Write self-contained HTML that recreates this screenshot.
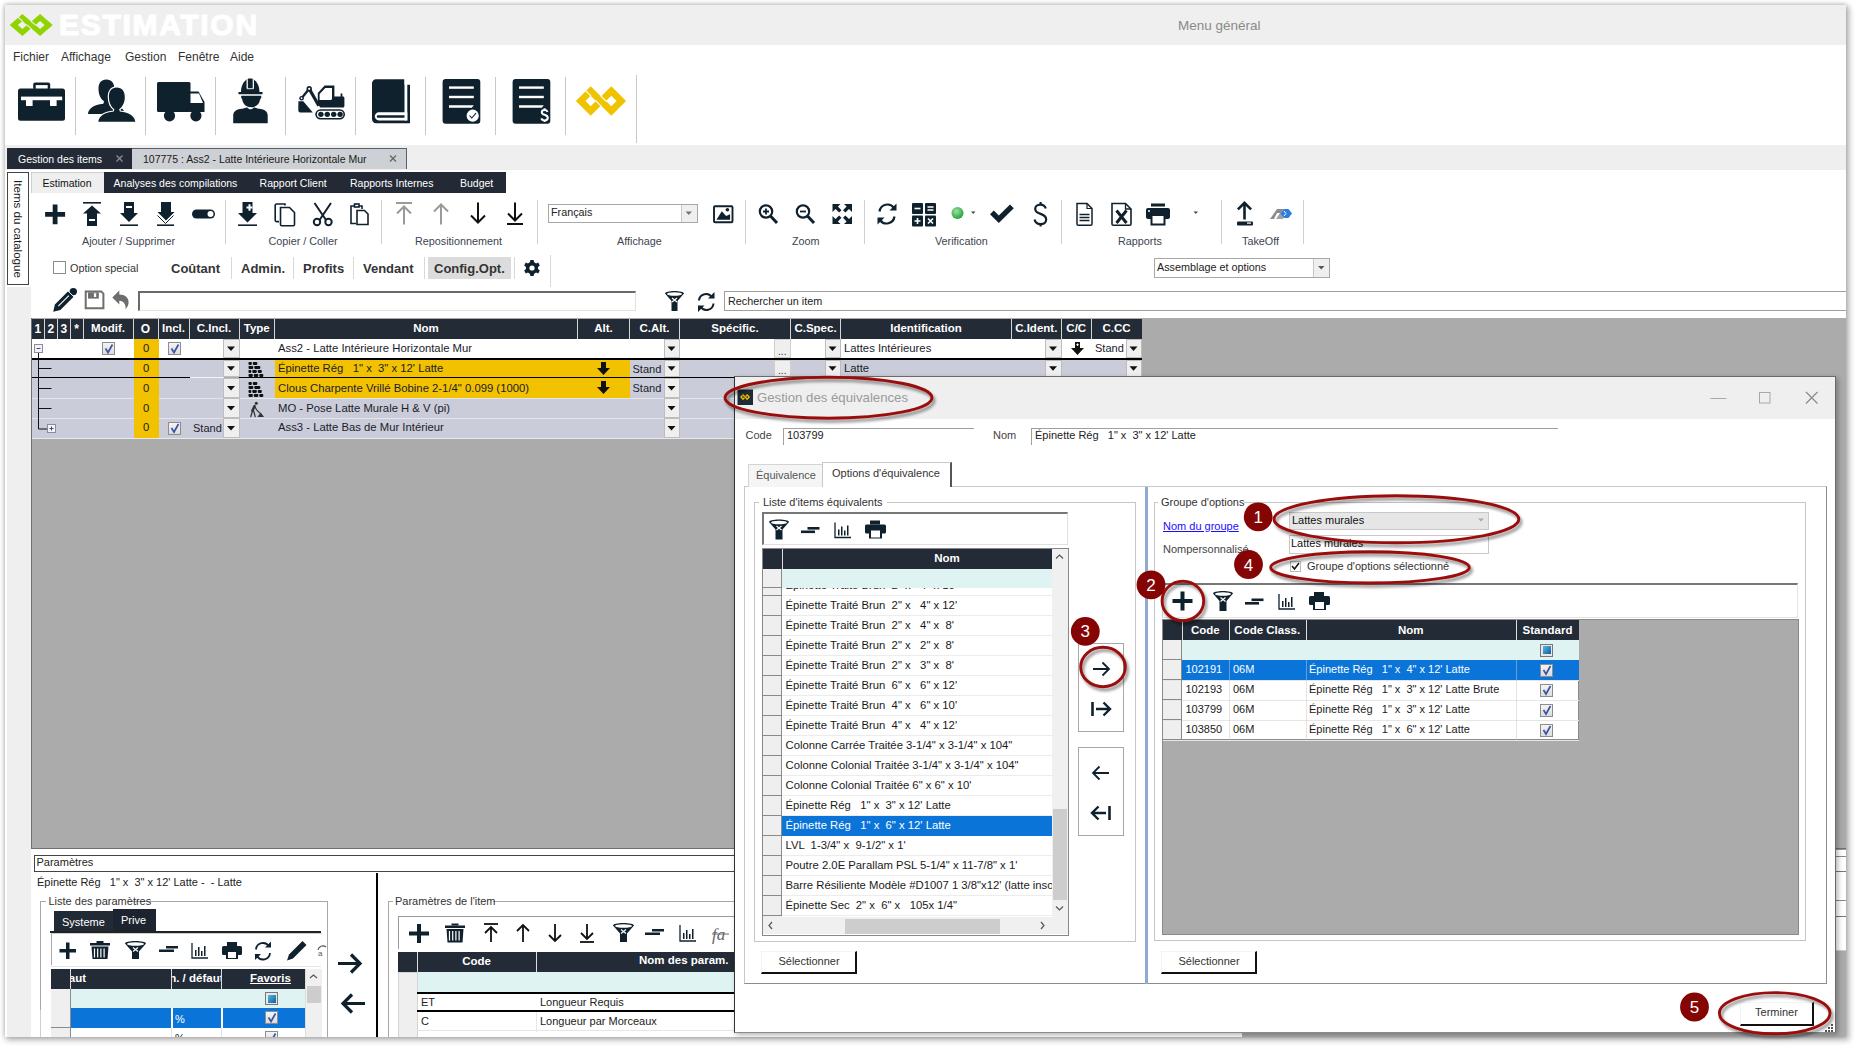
<!DOCTYPE html>
<html><head><meta charset="utf-8">
<style>
*{box-sizing:border-box;margin:0;padding:0}
html,body{width:1855px;height:1046px;overflow:hidden;background:#fff;font-family:"Liberation Sans",sans-serif;font-size:11px;color:#222}
.a{position:absolute}
.t{position:absolute;white-space:nowrap;line-height:1}
svg{position:absolute;overflow:visible}
#win{left:5px;top:5px;width:1841px;height:1032px;background:#fff;box-shadow:2px 2px 6px 1px rgba(0,0,0,.32),-1px -1px 4px rgba(0,0,0,.15)}
#app{left:0;top:0;width:1846px;height:1037px;overflow:hidden}
.sep{position:absolute;width:1px;background:#c8c8c8}
</style></head><body>
<div id="win" class="a"></div>
<div id="app" class="a">

<div class="a" style="left:5px;top:5px;width:1841px;height:39.5px;background:#efefef;"></div>
<svg style="left:0;top:0" width="1" height="1"><g transform="translate(22.4,25) scale(0.858,0.743)"><path fill-rule="evenodd" fill="#8fd400" d="M-14.8 0L0 -14.8L14.8 0L0 14.8ZM-5.3 0L0 5.3L5.3 0L0 -5.3Z"/><path fill-rule="evenodd" fill="#8fd400" d="M5.800000000000001 0L20.6 -14.8L35.400000000000006 0L20.6 14.8ZM15.3 0L20.6 5.3L25.900000000000002 0L20.6 -5.3Z"/><path d="M-5.2 -10.5L0.4 -4.9M10 -5.2L15.7 0.5M4.8 -0.5L10.5 5.2" stroke="#efefef" stroke-width="1.3" fill="none"/></g></svg>
<div class="t" style="left:59.0px;top:10.2px;font-size:30px;color:#fff;font-weight:bold;letter-spacing:1.7px;-webkit-text-stroke:1.2px #fff;">ESTIMATION</div>
<div class="t" style="left:1178.0px;top:18.6px;font-size:13.5px;color:#8a8a8a;">Menu général</div>
<div class="t" style="left:13.0px;top:51.0px;font-size:12px;color:#333;">Fichier</div>
<div class="t" style="left:61.0px;top:51.0px;font-size:12px;color:#333;">Affichage</div>
<div class="t" style="left:125.0px;top:51.0px;font-size:12px;color:#333;">Gestion</div>
<div class="t" style="left:178.0px;top:51.0px;font-size:12px;color:#333;">Fenêtre</div>
<div class="t" style="left:230.0px;top:51.0px;font-size:12px;color:#333;">Aide</div>
<div class="sep" style="left:75px;top:77px;height:58px"></div>
<div class="sep" style="left:145px;top:77px;height:58px"></div>
<div class="sep" style="left:215px;top:77px;height:58px"></div>
<div class="sep" style="left:285px;top:77px;height:58px"></div>
<div class="sep" style="left:355px;top:77px;height:58px"></div>
<div class="sep" style="left:425px;top:77px;height:58px"></div>
<div class="sep" style="left:495px;top:77px;height:58px"></div>
<div class="sep" style="left:565px;top:77px;height:58px"></div>
<div class="sep" style="left:636px;top:75px;height:68px"></div>
<svg style="left:0;top:0" width="660" height="150">
 <g fill="#10212e">
  <!-- briefcase -->
  <rect x="33.2" y="82.6" width="17" height="7" rx="2"/>
  <rect x="35.7" y="85.1" width="12" height="4" fill="#fff"/>
  <rect x="18" y="88.6" width="47" height="32.2" rx="2.5"/>
  <rect x="21" y="96.6" width="41.2" height="3.6" fill="#fff"/>
  <rect x="26" y="100" width="6.6" height="6" fill="#fff"/>
  <rect x="50" y="100" width="6.6" height="6" fill="#fff"/>
  <!-- users -->
  <path transform="translate(-10.4,-7.9)" d="M98.3 121.8C99 116.5 103.5 112.5 113.8 111.6L114.4 109.2C111 107 109 102.5 108.9 97C108.8 91 111.5 87.4 116.8 87.4C122 87.4 124.8 91 124.8 97C124.8 102.5 122.5 107 119.2 109.2L119.8 111.6C130 112.5 134.5 116.5 135.3 121.8Z"/>
  <path d="M98.3 121.8C99 116.5 103.5 112.5 113.8 111.6L114.4 109.2C111 107 109 102.5 108.9 97C108.8 91 111.5 87.4 116.8 87.4C122 87.4 124.8 91 124.8 97C124.8 102.5 122.5 107 119.2 109.2L119.8 111.6C130 112.5 134.5 116.5 135.3 121.8Z" stroke="#fff" stroke-width="2.4"/>
  <path d="M98.3 121.8C99 116.5 103.5 112.5 113.8 111.6L114.4 109.2C111 107 109 102.5 108.9 97C108.8 91 111.5 87.4 116.8 87.4C122 87.4 124.8 91 124.8 97C124.8 102.5 122.5 107 119.2 109.2L119.8 111.6C130 112.5 134.5 116.5 135.3 121.8Z"/>
  <!-- truck -->
  <rect x="157" y="82" width="33.5" height="30" rx="1.5"/>
  <path d="M190 91.4h8.5l6 10.5v10.1h-14.5z"/>
  <path d="M190.5 93.6h8.5l4 9.5h-12.5z" fill="#fff"/>
  <circle cx="169.5" cy="115.8" r="5.6"/>
  <circle cx="195.9" cy="115.8" r="5.6"/>
  <!-- worker -->
  <rect x="247.7" y="78.5" width="5" height="10" rx="1"/>
  <path d="M241 92c0 -7 3.5 -11.5 6 -12.5v8.5h6.5v-8.5c2.5 1 6 5.5 6 12.5h3v2.3h-24v-2.3z"/>
  <path d="M247 80v8.7h6.5v-8.7" fill="none" stroke="#fff" stroke-width="0.9"/>
  <path d="M241.5 95.8h19.5c.5 1 .5 2 -.8 3.5c-.7 5 -4.5 8 -9 8c-4.5 0 -8.5 -3 -9 -8c-1.3 -1.5 -1.3 -2.5 -.7 -3.5z"/>
  <path d="M242 108.8c2 -.5 4 -1 5 -1.5c1 1.5 2.5 2 3.5 2c1 0 2.5 -.5 3.5 -2c1 .5 3 1 5 1.5c6 .5 8.5 3 8.7 6.5v8h-34.5v-8c.3 -3.5 2.5 -6 8.8 -6.5z"/>
  <!-- excavator -->
  <path d="M298.4 101.2h4.9l9.5 11.2h-12.6c-1 0 -1.9 -.8 -1.9 -1.9z"/>
  <path d="M301.6 98.2L309.2 88.8" stroke="#10212e" stroke-width="2.3"/>
  <path d="M309.2 88.8L318.8 105.8" stroke="#10212e" stroke-width="3.2"/>
  <circle cx="309.2" cy="88.8" r="2.7"/><circle cx="309.2" cy="88.8" r="1.1" fill="#fff"/>
  <circle cx="301.6" cy="98.2" r="2.3"/><circle cx="301.6" cy="98.2" r="0.9" fill="#fff"/>
  <path d="M317.8 93L324.6 85.6H334.4V96.4H340.6V93.4H342.4V96.4H343C343.8 96.4 344.4 97 344.4 97.8V106C344.4 106.8 343.8 107.6 343 107.6H320.2L317.8 104z"/>
  <path d="M319.6 94L325.3 88H332V98.8C332 99.5 331.5 100 330.8 100H319.6z" fill="#fff"/>
  <rect x="315.3" y="109.2" width="29.7" height="10.3" rx="5.15"/>
  <rect x="316.9" y="110.8" width="26.5" height="7.1" rx="3.55" fill="#fff"/>
  <circle cx="320.9" cy="114.35" r="2.7"/><circle cx="327.3" cy="114.35" r="2.7"/><circle cx="333.7" cy="114.35" r="2.7"/><circle cx="340.1" cy="114.35" r="2.7"/>
  <!-- book -->
  <path d="M376 79.2H404.5V84.8H410V123.3H376C373.8 123.3 372 121.5 372 119.3V83.2C372 81 373.8 79.2 376 79.2Z"/>
  <rect x="404.5" y="79" width="2.8" height="41.4" fill="#fff"/>
  <path d="M378.9 112.2H407.3V120.4H378.9C376.6 120.4 374.8 118.6 374.8 116.3C374.8 114 376.6 112.2 378.9 112.2Z" fill="#fff"/>
  <path d="M378 115.2H404.5V117.7H378C377.3 117.7 376.8 117.2 376.8 116.45C376.8 115.7 377.3 115.2 378 115.2Z"/>
  <!-- doc check -->
  <rect x="442.6" y="79" width="37.7" height="44.8" rx="3"/>
  <rect x="449" y="86.4" width="24.8" height="2.4" fill="#fff"/>
  <rect x="449" y="95.8" width="24.8" height="2.4" fill="#fff"/>
  <path d="M449 105.3h24.8l-2 2.4h-22.8z" fill="#fff"/>
  <circle cx="472.7" cy="115.7" r="6.1" fill="#fff"/>
  <path d="M469.5 115.5l2.3 2.5l4.2 -4.8" fill="none" stroke="#10212e" stroke-width="1.1"/>
  <!-- doc dollar -->
  <rect x="512.6" y="79" width="37.7" height="44.8" rx="3"/>
  <rect x="519" y="86.4" width="24.8" height="2.4" fill="#fff"/>
  <rect x="519" y="95.8" width="24.8" height="2.4" fill="#fff"/>
  <path d="M519 105.3h24.8l-2 2.4h-22.8z" fill="#fff"/>
  <path d="M547.6 111.8C547 110.5 546 109.9 544.6 109.9C542.8 109.9 541.8 110.9 541.8 112.2C541.8 113.7 543 114.3 544.6 114.8C546.5 115.4 547.8 116 547.8 117.8C547.8 119.3 546.6 120.4 544.6 120.4C543 120.4 541.8 119.6 541.3 118.3M544.6 108.2V110M544.6 120.3V122" fill="none" stroke="#fff" stroke-width="2"/>
 </g>
 <g transform="translate(590.7,101) scale(1,1)"><path fill-rule="evenodd" fill="#f0c300" d="M-14.8 0L0 -14.8L14.8 0L0 14.8ZM-5.3 0L0 5.3L5.3 0L0 -5.3Z"/><path fill-rule="evenodd" fill="#f0c300" d="M5.800000000000001 0L20.6 -14.8L35.400000000000006 0L20.6 14.8ZM15.3 0L20.6 5.3L25.900000000000002 0L20.6 -5.3Z"/><path d="M-5.2 -10.5L0.4 -4.9M10 -5.2L15.7 0.5M4.8 -0.5L10.5 5.2" stroke="#fff" stroke-width="1.1" fill="none"/></g>
</svg>
<div class="a" style="left:5px;top:145px;width:1841px;height:25px;background:#efefef;"></div>
<div class="a" style="left:7px;top:148px;width:125px;height:21px;background:#232a35;"></div>
<div class="t" style="left:18.0px;top:153.6px;font-size:10.5px;color:#fff;">Gestion des items</div>
<svg style="left:0;top:0" width="1" height="1"><path d="M116.5 155.5l6 6m0 -6l-6 6" stroke="#8a8f96" stroke-width="1.3"/></svg>
<div class="a" style="left:132px;top:148px;width:275px;height:21px;background:#cdd1d5;border:none;border-top:1px solid #55606b;border-right:1px solid #55606b;"></div>
<div class="t" style="left:143.0px;top:153.6px;font-size:10.5px;color:#1a1a1a;">107775 : Ass2 - Latte Intérieure Horizontale Mur</div>
<svg style="left:0;top:0" width="1" height="1"><path d="M390 155.5l6 6m0 -6l-6 6" stroke="#666" stroke-width="1.3"/></svg>
<div class="a" style="left:7px;top:287px;width:24px;height:753px;background:#efefef;"></div>
<div class="a" style="left:7px;top:172px;width:22px;height:113px;background:#fff;border:1px solid #444;"></div>
<div class="t" style="left:11.5px;top:179.5px;font-size:11.6px;color:#1a1a1a;writing-mode:vertical-rl;line-height:13px">Items du catalogue</div>
<div class="a" style="left:31px;top:172px;width:73px;height:21px;background:#efefef;border:none;border-left:1px solid #d0d0d0;border-top:1px solid #d0d0d0;"></div>
<div class="t" style="left:42.5px;top:177.9px;font-size:10.5px;color:#111;">Estimation</div>
<div class="a" style="left:104px;top:172px;width:402px;height:21px;background:#232a35;"></div>
<div class="t" style="left:113.6px;top:177.9px;font-size:10.5px;color:#fff;">Analyses des compilations</div>
<div class="t" style="left:259.6px;top:177.9px;font-size:10.5px;color:#fff;">Rapport Client</div>
<div class="t" style="left:350.0px;top:177.9px;font-size:10.5px;color:#fff;">Rapports Internes</div>
<div class="t" style="left:460.0px;top:177.9px;font-size:10.5px;color:#fff;">Budget</div>
<svg style="left:0;top:0" width="1" height="1">
<g fill="#10212e">
 <path d="M52.7 204.5h4.8v7.4h7.6v4.8h-7.6v7.6h-4.8v-7.6h-7.6v-4.8h7.6z"/>
 <rect x="83" y="202" width="18" height="1.6"/>
 <path d="M92 205.5l9 8h-4v12.5h-10v-12.5h-4z"/><rect x="89" y="219" width="6" height="2" fill="#fff"/>
 <path d="M124 202h10v11h4l-9 9l-9 -9h4z"/><rect x="126" y="206" width="6" height="2" fill="#fff"/><rect x="120" y="224.4" width="18" height="1.6"/>
 <path d="M161 202h10v10h3.5l-8.5 8.5l-8.5 -8.5h3.5z"/><path d="M157.5 215.5l8 8l8 -8" fill="none" stroke="#10212e" stroke-width="1"/><rect x="157" y="224.4" width="17" height="1.6"/>
 <rect x="192" y="209.5" width="23" height="9" rx="4.5"/><circle cx="210.5" cy="214" r="3" fill="#fff"/>
 <path d="M242.5 202h10v11h4.5l-9.5 9.5l-9.5 -9.5h4.5z"/><path d="M246.5 206.5h2v-2.2h2v2.2h2v2h-2v2.2h-2v-2.2h-2z" fill="#fff"/><rect x="238" y="224.4" width="19" height="1.6"/>
</g>
<g fill="none" stroke="#10212e" stroke-width="1.6">
 <path d="M285 205.5v-1.5h-8.5c-.8 0 -1.3 .5 -1.3 1.3v15c0 .8 .5 1.3 1.3 1.3h2.5"/>
 <path d="M280.5 207.5h9l5 5v12c0 .8 -.5 1.3 -1.3 1.3h-11.4c-.8 0 -1.3 -.5 -1.3 -1.3z"/>
 <circle cx="317" cy="222" r="3.2" stroke-width="2"/><circle cx="328.5" cy="222" r="3.2" stroke-width="2"/>
 <path d="M314.5 203l11.5 17m5 -17l-11.5 17" stroke-width="2"/>
 <path d="M354 206h-3v17.5h5m3 -17.5h3v3"/><rect x="354.5" y="204" width="4.5" height="3"/>
 <path d="M357 210.5h7.5l3.5 3.5v10.5h-11z"/>
</g>
<g fill="none" stroke="#9a9a9a" stroke-width="2">
 <path d="M396 203h16"/><path d="M404 224.5v-18m-7 7l7 -7l7 7"/>
 <path d="M441 224.5v-20m-7 7l7 -7l7 7"/>
</g>
<g fill="none" stroke="#111" stroke-width="2">
 <path d="M478 202.5v20m-7 -7l7 7l7 -7"/>
 <path d="M515 202.5v18m-7 -7l7 7l7 -7"/><path d="M507 224h16"/>
</g>
<g fill="none" stroke="#10212e">
 <rect x="714" y="206.2" width="18.5" height="16" rx="1" stroke-width="1.9"/>
 <path d="M716.5 219.8l5.3 -8.6l4.3 4.8l4 -1.8v5.6z" fill="#10212e" stroke="none"/><circle cx="727.4" cy="209.8" r="1.8" fill="#10212e" stroke="none"/>
 <circle cx="766" cy="211.5" r="6.2" stroke-width="2.2"/><path d="M763 211.5h6m-3 -3v6" stroke-width="1.8"/><path d="M770.5 216l6.5 7" stroke-width="3"/>
 <circle cx="803" cy="211.5" r="6.2" stroke-width="2.2"/><path d="M800 211.5h6" stroke-width="1.8"/><path d="M807.5 216l6.5 7" stroke-width="3"/>
</g>
<g fill="#10212e">
 <path d="M832.5 204h8l-2.6 2.6l3.6 3.6l-2.4 2.4l-3.6 -3.6l-3 3z"/><path d="M852 204h-8l2.6 2.6l-3.6 3.6l2.4 2.4l3.6 -3.6l3 3z"/>
 <path d="M832.5 224h8l-2.6 -2.6l3.6 -3.6l-2.4 -2.4l-3.6 3.6l-3 -3z"/><path d="M852 224h-8l2.6 -2.6l-3.6 -3.6l2.4 -2.4l3.6 3.6l3 -3z"/>
</g>
<g fill="none" stroke="#10212e" stroke-width="2.2">
 <path d="M879.5 211.5a8 8 0 0 1 14.5 -3.5"/><path d="M894.5 216.5a8 8 0 0 1 -14.5 3.5"/>
</g>
<g fill="#10212e">
 <path d="M896.5 203.5v7h-7z"/><path d="M877.5 224.5v-7h7z"/>
 <rect x="912" y="203" width="11" height="11" rx="1"/><rect x="925" y="203" width="11" height="11" rx="1"/>
 <rect x="912" y="215.5" width="11" height="11" rx="1"/><rect x="925" y="215.5" width="11" height="11" rx="1"/>
</g>
<g stroke="#fff" stroke-width="1.6" fill="none">
 <path d="M914.5 208.5h6"/><path d="M927.5 207h6m-6 3h6"/><path d="M914.5 221h6m-3 -3v6"/><path d="M928 218.5l5 5m0 -5l-5 5"/>
</g>
<defs><radialGradient id="gd" cx="0.4" cy="0.35" r="0.7"><stop offset="0" stop-color="#9de39d"/><stop offset="1" stop-color="#1e9a3a"/></radialGradient></defs>
<circle cx="957.5" cy="213" r="6" fill="url(#gd)"/>
<path d="M971 211.5h4.5l-2.25 2.5z" fill="#444"/>
<path d="M990 214.2l3.8 -3.8l5 5l11.2 -11l3.8 3.8l-15 14.9z" fill="#10212e"/>
<path d="M1045.8 208.5C1045 205.8 1042.8 204.6 1040.3 204.6C1037.3 204.6 1035.2 206.5 1035.2 209C1035.2 212 1037.8 213 1040.6 213.9C1044 215 1046.2 216.5 1046.2 219.6C1046.2 222.6 1043.6 224.2 1040.6 224.2C1037.4 224.2 1035.2 222.4 1034.6 219.6M1040.6 202v2.8M1040.6 224v2.6" fill="none" stroke="#10212e" stroke-width="2.2"/>
<g fill="none" stroke="#10212e" stroke-width="1.5">
 <path d="M1077 203.5h10l5 5v15.5c0 .8 -.5 1.3 -1.3 1.3h-12.4c-.8 0 -1.3 -.5 -1.3 -1.3z"/><path d="M1079.5 214.5h10m-10 3h10m-10 3h10" stroke-width="1.6"/>
 <path d="M1112 203.5h13.5l5.5 5.5v15c0 .8 -.5 1.3 -1.3 1.3h-16.4c-.8 0 -1.3 -.5 -1.3 -1.3z" stroke-width="1.6"/>
</g>
<path d="M1116.5 210.5l10 12.5m0 -12.5l-10 12.5" stroke="#10212e" stroke-width="3"/><path d="M1125.5 203.5v5.5h5.5" fill="none" stroke="#10212e" stroke-width="1.3"/><path d="M1087 203.5v5h5" fill="none" stroke="#10212e" stroke-width="1.2"/>
<g fill="#10212e">
 <rect x="1151" y="203.5" width="14" height="3"/><rect x="1146" y="208" width="24" height="11" rx="2"/>
 <rect x="1150.5" y="214" width="15" height="11.5"/><rect x="1152.5" y="216" width="11" height="7.5" fill="#fff"/><circle cx="1149" cy="211" r="1" fill="#fff"/>
 <path d="M1193.5 211.5h4.5l-2.25 2.5z" fill="#444"/>
 <path d="M1244.5 201l7.5 7.5l-1.8 1.8l-4.4 -4.4v13.5h-2.6v-13.5l-4.4 4.4l-1.8 -1.8z"/><rect x="1237" y="221.5" width="16" height="4" rx="1"/><rect x="1247" y="222.5" width="4" height="1.2" fill="#fff"/>
 <path d="M1270 219l7 -10h7l-3 4h-4l-3 6z" fill="#8c8c8c"/><path d="M1276 219l4 -6h5l-2 6z" fill="#a0a0a0"/><path d="M1284 209l4.5 0l3.5 4.5l-3.5 4.5h-4.5l-3.5 -4.5z" fill="#2d7de0"/><path d="M1284 211l2 2.5l-2 2.5" fill="none" stroke="#fff" stroke-width="1"/>
</g>
</svg>
<div class="sep" style="left:225px;top:200px;height:44px;background:#d0d0d0"></div>
<div class="sep" style="left:381px;top:200px;height:44px;background:#d0d0d0"></div>
<div class="sep" style="left:537px;top:200px;height:44px;background:#d0d0d0"></div>
<div class="sep" style="left:745px;top:200px;height:44px;background:#d0d0d0"></div>
<div class="sep" style="left:864px;top:200px;height:44px;background:#d0d0d0"></div>
<div class="sep" style="left:1061px;top:200px;height:44px;background:#d0d0d0"></div>
<div class="sep" style="left:1221px;top:200px;height:44px;background:#d0d0d0"></div>
<div class="sep" style="left:1303px;top:200px;height:44px;background:#d0d0d0"></div>
<div class="t" style="left:82.0px;top:235.9px;font-size:10.8px;color:#3d4450;">Ajouter / Supprimer</div>
<div class="t" style="left:268.5px;top:235.9px;font-size:10.8px;color:#3d4450;">Copier / Coller</div>
<div class="t" style="left:415.0px;top:235.9px;font-size:10.8px;color:#3d4450;">Repositionnement</div>
<div class="t" style="left:617.0px;top:235.9px;font-size:10.8px;color:#3d4450;">Affichage</div>
<div class="t" style="left:792.0px;top:235.9px;font-size:10.8px;color:#3d4450;">Zoom</div>
<div class="t" style="left:935.0px;top:235.9px;font-size:10.8px;color:#3d4450;">Verification</div>
<div class="t" style="left:1118.0px;top:235.9px;font-size:10.8px;color:#3d4450;">Rapports</div>
<div class="t" style="left:1242.0px;top:235.9px;font-size:10.8px;color:#3d4450;">TakeOff</div>
<div class="a" style="left:548px;top:203.5px;width:150px;height:19.5px;background:#fff;border:1px solid #a8a8a8;"></div>
<div class="a" style="left:681px;top:204.5px;width:16px;height:17.5px;background:#efefef;border:none;border-left:1px solid #c8c8c8;"></div>
<svg style="left:0;top:0" width="1" height="1"><path d="M685.5 211.5h6.5l-3.25 3.5z" fill="#777"/></svg>
<div class="t" style="left:551.0px;top:207.4px;font-size:10.8px;color:#222;">Français</div>
<div class="a" style="left:53px;top:261px;width:13px;height:13px;background:#fff;border:1px solid #8a8a8a;"></div>
<div class="t" style="left:70.0px;top:263.4px;font-size:10.8px;color:#333;">Option special</div>
<div class="a" style="left:428px;top:257px;width:83px;height:22px;background:#dcdcdc;"></div>
<div class="t" style="left:171.0px;top:262.0px;font-size:13px;color:#343434;font-weight:bold;">Coûtant</div>
<div class="t" style="left:241.0px;top:262.0px;font-size:13px;color:#343434;font-weight:bold;">Admin.</div>
<div class="t" style="left:303.0px;top:262.0px;font-size:13px;color:#343434;font-weight:bold;">Profits</div>
<div class="t" style="left:363.0px;top:262.0px;font-size:13px;color:#343434;font-weight:bold;">Vendant</div>
<div class="t" style="left:434.0px;top:262.0px;font-size:13px;color:#343434;font-weight:bold;">Config.Opt.</div>
<div class="sep" style="left:231px;top:257px;height:22px;background:#d8d8d8"></div>
<div class="sep" style="left:293px;top:257px;height:22px;background:#d8d8d8"></div>
<div class="sep" style="left:353px;top:257px;height:22px;background:#d8d8d8"></div>
<div class="sep" style="left:424px;top:257px;height:22px;background:#d8d8d8"></div>
<div class="sep" style="left:514px;top:257px;height:22px;background:#d8d8d8"></div>
<div class="sep" style="left:550px;top:255px;height:32px;background:#d8d8d8"></div>
<svg style="left:0;top:0" width="1" height="1"><g transform="translate(532,268)">
<path fill="#10212e" d="M-1.6 -8h3.2l.5 2.3a6 6 0 0 1 1.9 1.1l2.2 -.8l1.6 2.8l-1.8 1.5a6 6 0 0 1 0 2.2l1.8 1.5l-1.6 2.8l-2.2 -.8a6 6 0 0 1 -1.9 1.1l-.5 2.3h-3.2l-.5 -2.3a6 6 0 0 1 -1.9 -1.1l-2.2 .8l-1.6 -2.8l1.8 -1.5a6 6 0 0 1 0 -2.2l-1.8 -1.5l1.6 -2.8l2.2 .8a6 6 0 0 1 1.9 -1.1z"/>
<circle r="2.6" fill="#fff"/></g></svg>
<div class="a" style="left:1154px;top:258px;width:176px;height:20px;background:#fff;border:1px solid #a8a8a8;"></div>
<div class="a" style="left:1313px;top:259px;width:16px;height:18px;background:#efefef;border:none;border-left:1px solid #c8c8c8;"></div>
<svg style="left:0;top:0" width="1" height="1"><path d="M1318 266h6.5l-3.25 3.5z" fill="#555"/></svg>
<div class="t" style="left:1157.0px;top:262.4px;font-size:10.8px;color:#222;">Assemblage et options</div>
<svg style="left:0;top:0" width="1" height="1"><g fill="#10212e">
 <path d="M53.2 311.8L54.9 304.6L68.4 291.1L73.9 296.6L60.4 310.1Z"/>
<circle cx="73.3" cy="291.6" r="3.7"/>
<path d="M68 290.9l6.3 6.3" stroke="#fff" stroke-width="1"/>
<path d="M58.3 306.2l10.6 -10.6" stroke="#fff" stroke-width="1.1"/>
</g>
<g fill="none" stroke="#6e6e6e" stroke-width="2"><path d="M85.7 291.4h15.5l2.2 2.2v14.7h-17.7z"/></g>
<rect x="88" y="292.4" width="10.8" height="6.2" fill="#6e6e6e"/><rect x="93.9" y="293.2" width="2.3" height="3.8" fill="#fff"/>
<path d="M112.3 297.6L119.3 290.6V294.6C125 294.6 129 298 128.6 303C128.3 305.5 127 307.5 125.6 309.2C126 305 124 300.8 119.3 300.8V304.6Z" fill="#6e6e6e"/>
<g fill="#10212e"><path d="M665 293.5c0 -1.5 4.5 -2.5 9.5 -2.5s9.5 1 9.5 2.5l-6.5 7.5v10h-6v-10z"/><ellipse cx="674.5" cy="294" rx="7.5" ry="1.8" fill="#fff"/><path d="M672 298l5 4m0 -4l-5 4" stroke="#fff" stroke-width="1.2"/></g>
<g fill="none" stroke="#10212e" stroke-width="2"><path d="M699 300.5a7 7 0 0 1 13 -3"/><path d="M713.5 303.5a7 7 0 0 1 -13 3"/></g>
<g fill="#10212e"><path d="M714.5 292v6.5h-6.5z"/><path d="M698 312v-6.5h6.5z"/></g>
</svg>
<div class="a" style="left:138px;top:291px;width:498px;height:20px;background:#fff;border:none;border-top:2px solid #6a6a6a;border-left:2px solid #6a6a6a;border-bottom:1px solid #e2e2e2;border-right:1px solid #e2e2e2;"></div>
<div class="a" style="left:724px;top:291px;width:1123px;height:20px;background:#fff;border:1px solid #a0a0a0;"></div>
<div class="t" style="left:728.0px;top:295.9px;font-size:10.8px;color:#222;">Rechercher un item</div>
<div class="a" style="left:31px;top:318px;width:1815px;height:531px;background:#ababab;border:none;border-bottom:1px solid #707070;border-left:1px solid #707070;"></div>
<div class="a" style="left:31.5px;top:318.5px;width:1110px;height:20.5px;background:#232b36;"></div>
<div class="t" style="left:31.5px;top:322.6px;width:12.5px;text-align:center;font-size:12px;color:#fff;font-weight:bold;">1</div>
<div class="t" style="left:44.0px;top:322.6px;width:13.5px;text-align:center;font-size:12px;color:#fff;font-weight:bold;">2</div>
<div class="a" style="left:43.5px;top:318.5px;width:1px;height:20.5px;background:#d6d6d6;"></div>
<div class="t" style="left:57.5px;top:322.6px;width:12.5px;text-align:center;font-size:12px;color:#fff;font-weight:bold;">3</div>
<div class="a" style="left:57.0px;top:318.5px;width:1px;height:20.5px;background:#d6d6d6;"></div>
<div class="t" style="left:70.0px;top:322.6px;width:13px;text-align:center;font-size:12px;color:#fff;font-weight:bold;">*</div>
<div class="a" style="left:69.5px;top:318.5px;width:1px;height:20.5px;background:#d6d6d6;"></div>
<div class="t" style="left:83.0px;top:323.1px;width:50px;text-align:center;font-size:11.5px;color:#fff;font-weight:bold;">Modif.</div>
<div class="a" style="left:82.5px;top:318.5px;width:1px;height:20.5px;background:#d6d6d6;"></div>
<div class="t" style="left:133.0px;top:322.6px;width:25px;text-align:center;font-size:12px;color:#fff;font-weight:bold;">O</div>
<div class="a" style="left:132.5px;top:318.5px;width:1px;height:20.5px;background:#d6d6d6;"></div>
<div class="t" style="left:158.0px;top:323.1px;width:31px;text-align:center;font-size:11.5px;color:#fff;font-weight:bold;">Incl.</div>
<div class="a" style="left:157.5px;top:318.5px;width:1px;height:20.5px;background:#d6d6d6;"></div>
<div class="t" style="left:189.0px;top:323.1px;width:50px;text-align:center;font-size:11.5px;color:#fff;font-weight:bold;">C.Incl.</div>
<div class="a" style="left:188.5px;top:318.5px;width:1px;height:20.5px;background:#d6d6d6;"></div>
<div class="t" style="left:239.0px;top:323.1px;width:35.5px;text-align:center;font-size:11.5px;color:#fff;font-weight:bold;">Type</div>
<div class="a" style="left:238.5px;top:318.5px;width:1px;height:20.5px;background:#d6d6d6;"></div>
<div class="t" style="left:274.5px;top:323.1px;width:303.0px;text-align:center;font-size:11.5px;color:#fff;font-weight:bold;">Nom</div>
<div class="a" style="left:274.0px;top:318.5px;width:1px;height:20.5px;background:#d6d6d6;"></div>
<div class="t" style="left:577.5px;top:323.1px;width:52.0px;text-align:center;font-size:11.5px;color:#fff;font-weight:bold;">Alt.</div>
<div class="a" style="left:577.0px;top:318.5px;width:1px;height:20.5px;background:#d6d6d6;"></div>
<div class="t" style="left:629.5px;top:323.1px;width:50.0px;text-align:center;font-size:11.5px;color:#fff;font-weight:bold;">C.Alt.</div>
<div class="a" style="left:629.0px;top:318.5px;width:1px;height:20.5px;background:#d6d6d6;"></div>
<div class="t" style="left:679.5px;top:323.1px;width:111.0px;text-align:center;font-size:11.5px;color:#fff;font-weight:bold;">Spécific.</div>
<div class="a" style="left:679.0px;top:318.5px;width:1px;height:20.5px;background:#d6d6d6;"></div>
<div class="t" style="left:790.5px;top:323.1px;width:50.0px;text-align:center;font-size:11.5px;color:#fff;font-weight:bold;">C.Spec.</div>
<div class="a" style="left:790.0px;top:318.5px;width:1px;height:20.5px;background:#d6d6d6;"></div>
<div class="t" style="left:840.5px;top:323.1px;width:171.0px;text-align:center;font-size:11.5px;color:#fff;font-weight:bold;">Identification</div>
<div class="a" style="left:840.0px;top:318.5px;width:1px;height:20.5px;background:#d6d6d6;"></div>
<div class="t" style="left:1011.5px;top:323.1px;width:49.5px;text-align:center;font-size:11.5px;color:#fff;font-weight:bold;">C.Ident.</div>
<div class="a" style="left:1011.0px;top:318.5px;width:1px;height:20.5px;background:#d6d6d6;"></div>
<div class="t" style="left:1061.0px;top:323.1px;width:30.5px;text-align:center;font-size:11.5px;color:#fff;font-weight:bold;">C/C</div>
<div class="a" style="left:1060.5px;top:318.5px;width:1px;height:20.5px;background:#d6d6d6;"></div>
<div class="t" style="left:1091.5px;top:323.1px;width:50.0px;text-align:center;font-size:11.5px;color:#fff;font-weight:bold;">C.CC</div>
<div class="a" style="left:1091.0px;top:318.5px;width:1px;height:20.5px;background:#d6d6d6;"></div>
<div class="a" style="left:31.5px;top:339px;width:1110px;height:19.5px;background:#fff;"></div>
<div class="a" style="left:31.5px;top:360px;width:1110px;height:17px;background:#cacdd9;"></div>
<div class="a" style="left:31.5px;top:378px;width:1110px;height:60px;background:#cacdd9;"></div>
<div class="a" style="left:31.5px;top:398px;width:1110px;height:1px;background:#e4e5ec;"></div>
<div class="a" style="left:31.5px;top:418px;width:1110px;height:1px;background:#e4e5ec;"></div>
<div class="a" style="left:31.5px;top:438px;width:1110px;height:1px;background:#e8e8ee;"></div>
<div class="a" style="left:134px;top:339px;width:24.5px;height:99px;background:#f2c200;"></div>
<div class="a" style="left:274.5px;top:360px;width:355px;height:17px;background:#f2c200;"></div>
<div class="a" style="left:274.5px;top:378px;width:355px;height:20px;background:#f2c200;"></div>
<div class="a" style="left:31.5px;top:358.3px;width:1110px;height:2px;background:#000;"></div>
<div class="a" style="left:31.5px;top:376.6px;width:158px;height:1.6px;background:#000;"></div>
<div class="a" style="left:189.5px;top:376.8px;width:34px;height:1.2px;background:#f4f4f4;"></div>
<div class="a" style="left:239px;top:376.6px;width:902px;height:1.6px;background:#000;"></div>
<div class="t" style="left:134.0px;top:342.9px;width:24.5px;text-align:center;font-size:11.3px;color:#1a1a1a;">0</div>
<div class="t" style="left:134.0px;top:362.9px;width:24.5px;text-align:center;font-size:11.3px;color:#1a1a1a;">0</div>
<div class="t" style="left:134.0px;top:382.9px;width:24.5px;text-align:center;font-size:11.3px;color:#1a1a1a;">0</div>
<div class="t" style="left:134.0px;top:402.9px;width:24.5px;text-align:center;font-size:11.3px;color:#1a1a1a;">0</div>
<div class="t" style="left:134.0px;top:422.4px;width:24.5px;text-align:center;font-size:11.3px;color:#1a1a1a;">0</div>
<div class="t" style="left:278.0px;top:342.9px;font-size:11.3px;color:#1b1b2b;">Ass2 - Latte Intérieure Horizontale Mur</div>
<div class="t" style="left:278.0px;top:363.2px;font-size:11.3px;color:#1b1b2b;">Épinette Rég &nbsp; 1" x &nbsp;3" x 12' Latte</div>
<div class="t" style="left:278.0px;top:382.9px;font-size:11.3px;color:#1b1b2b;">Clous Charpente Vrillé Bobine 2-1/4" 0.099 (1000)</div>
<div class="t" style="left:278.0px;top:402.9px;font-size:11.3px;color:#1b1b2b;">MO - Pose Latte Murale H &amp; V (pi)</div>
<div class="t" style="left:278.0px;top:422.4px;font-size:11.3px;color:#1b1b2b;">Ass3 - Latte Bas de Mur Intérieur</div>
<div class="t" style="left:632.5px;top:363.5px;font-size:11px;color:#1b1b2b;">Stand</div>
<div class="t" style="left:632.5px;top:383.2px;font-size:11px;color:#1b1b2b;">Stand</div>
<div class="t" style="left:193.0px;top:422.7px;font-size:11px;color:#1b1b2b;">Stand</div>
<div class="t" style="left:844.0px;top:342.9px;font-size:11.3px;color:#1b1b2b;">Lattes Intérieures</div>
<div class="t" style="left:844.0px;top:363.2px;font-size:11.3px;color:#1b1b2b;">Latte</div>
<div class="a" style="left:1093px;top:339px;width:32px;height:19px;overflow:hidden"><div class="t" style="left:2px;top:4px;font-size:11px;color:#1b1b2b">Stand</div></div>
<div class="a" style="left:223px;top:339px;width:16.5px;height:19px;background:#efefef;border:1px solid #bdbdbd;"></div>
<svg style="left:0;top:0" width="1" height="1"><path d="M227.0 346.5h8l-4 4.5z" fill="#111"/></svg>
<div class="a" style="left:663.5px;top:339px;width:16.5px;height:19px;background:#efefef;border:1px solid #bdbdbd;"></div>
<svg style="left:0;top:0" width="1" height="1"><path d="M667.5 346.5h8l-4 4.5z" fill="#111"/></svg>
<div class="a" style="left:223px;top:359.5px;width:16.5px;height:17.5px;background:#efefef;border:1px solid #bdbdbd;"></div>
<svg style="left:0;top:0" width="1" height="1"><path d="M227.0 366.2h8l-4 4.5z" fill="#111"/></svg>
<div class="a" style="left:663.5px;top:359.5px;width:16.5px;height:17.5px;background:#efefef;border:1px solid #bdbdbd;"></div>
<svg style="left:0;top:0" width="1" height="1"><path d="M667.5 366.2h8l-4 4.5z" fill="#111"/></svg>
<div class="a" style="left:223px;top:378px;width:16.5px;height:20px;background:#efefef;border:1px solid #bdbdbd;"></div>
<svg style="left:0;top:0" width="1" height="1"><path d="M227.0 386.0h8l-4 4.5z" fill="#111"/></svg>
<div class="a" style="left:663.5px;top:378px;width:16.5px;height:20px;background:#efefef;border:1px solid #bdbdbd;"></div>
<svg style="left:0;top:0" width="1" height="1"><path d="M667.5 386.0h8l-4 4.5z" fill="#111"/></svg>
<div class="a" style="left:223px;top:398px;width:16.5px;height:20px;background:#efefef;border:1px solid #bdbdbd;"></div>
<svg style="left:0;top:0" width="1" height="1"><path d="M227.0 406.0h8l-4 4.5z" fill="#111"/></svg>
<div class="a" style="left:663.5px;top:398px;width:16.5px;height:20px;background:#efefef;border:1px solid #bdbdbd;"></div>
<svg style="left:0;top:0" width="1" height="1"><path d="M667.5 406.0h8l-4 4.5z" fill="#111"/></svg>
<div class="a" style="left:223px;top:418px;width:16.5px;height:20px;background:#efefef;border:1px solid #bdbdbd;"></div>
<svg style="left:0;top:0" width="1" height="1"><path d="M227.0 426.0h8l-4 4.5z" fill="#111"/></svg>
<div class="a" style="left:663.5px;top:418px;width:16.5px;height:20px;background:#efefef;border:1px solid #bdbdbd;"></div>
<svg style="left:0;top:0" width="1" height="1"><path d="M667.5 426.0h8l-4 4.5z" fill="#111"/></svg>
<div class="a" style="left:824.5px;top:339px;width:16.5px;height:19px;background:#efefef;border:1px solid #bdbdbd;"></div>
<svg style="left:0;top:0" width="1" height="1"><path d="M828.5 346.5h8l-4 4.5z" fill="#111"/></svg>
<div class="a" style="left:1045px;top:339px;width:16.5px;height:19px;background:#efefef;border:1px solid #bdbdbd;"></div>
<svg style="left:0;top:0" width="1" height="1"><path d="M1049.0 346.5h8l-4 4.5z" fill="#111"/></svg>
<div class="a" style="left:1125.5px;top:339px;width:16.5px;height:19px;background:#efefef;border:1px solid #bdbdbd;"></div>
<svg style="left:0;top:0" width="1" height="1"><path d="M1129.5 346.5h8l-4 4.5z" fill="#111"/></svg>
<div class="a" style="left:774px;top:339px;width:16.5px;height:19px;background:#efefef;border:1px solid #cfcfcf;"></div>
<div class="t" style="left:774.0px;top:346.5px;width:16.5px;text-align:center;font-size:10px;color:#333;">...</div>
<div class="a" style="left:824.5px;top:359.5px;width:16.5px;height:17.5px;background:#efefef;border:1px solid #bdbdbd;"></div>
<svg style="left:0;top:0" width="1" height="1"><path d="M828.5 366.2h8l-4 4.5z" fill="#111"/></svg>
<div class="a" style="left:1045px;top:359.5px;width:16.5px;height:17.5px;background:#efefef;border:1px solid #bdbdbd;"></div>
<svg style="left:0;top:0" width="1" height="1"><path d="M1049.0 366.2h8l-4 4.5z" fill="#111"/></svg>
<div class="a" style="left:1125.5px;top:359.5px;width:16.5px;height:17.5px;background:#efefef;border:1px solid #bdbdbd;"></div>
<svg style="left:0;top:0" width="1" height="1"><path d="M1129.5 366.2h8l-4 4.5z" fill="#111"/></svg>
<div class="a" style="left:774px;top:359.5px;width:16.5px;height:17.5px;background:#efefef;border:1px solid #cfcfcf;"></div>
<div class="t" style="left:774.0px;top:365.5px;width:16.5px;text-align:center;font-size:10px;color:#333;">...</div>
<div class="a" style="left:790.5px;top:360px;width:34px;height:17px;background:#cacdd9;"></div>
<div class="a" style="left:102px;top:342px;width:13px;height:13px;background:linear-gradient(#f4f4f4,#dcdcdc);border:1px solid #8d8d8d;"></div>
<svg style="left:0;top:0" width="1" height="1"><path d="M105.5 348.5l2.5 4l4.5 -8" fill="none" stroke="#3a55a8" stroke-width="1.7"/></svg>
<div class="a" style="left:168px;top:342px;width:13px;height:13px;background:linear-gradient(#f4f4f4,#dcdcdc);border:1px solid #8d8d8d;"></div>
<svg style="left:0;top:0" width="1" height="1"><path d="M171.5 348.5l2.5 4l4.5 -8" fill="none" stroke="#3a55a8" stroke-width="1.7"/></svg>
<div class="a" style="left:168px;top:421.5px;width:13px;height:13px;background:linear-gradient(#f4f4f4,#dcdcdc);border:1px solid #8d8d8d;"></div>
<svg style="left:0;top:0" width="1" height="1"><path d="M171.5 428.0l2.5 4l4.5 -8" fill="none" stroke="#3a55a8" stroke-width="1.7"/></svg>
<svg style="left:0;top:0" width="1" height="1"><g stroke="#111" stroke-width="1" fill="none">
<path d="M38.5 352.5v76.5h8.5"/><path d="M39 368.5h12.5m-12.5 20h12.5m-12.5 20h12.5"/></g>
<rect x="34.5" y="344.5" width="8" height="8" fill="#f3f3f3" stroke="#8b8b9b"/><path d="M36.5 348.5h4" stroke="#3848a0"/>
<rect x="47.5" y="424.5" width="8" height="8" fill="#f3f3f3" stroke="#8b8b9b"/><path d="M49.5 428.5h4m-2 -2v4" stroke="#3848a0"/>
</svg>
<svg style="left:0;top:0" width="1" height="1"><g fill="#111"><rect x="248.5" y="362.0" width="3.3" height="2.9" rx="0.8"/><rect x="252.8" y="362.0" width="4.5" height="2.9" rx="0.8"/><rect x="248.5" y="366.0" width="4.8" height="2.9" rx="0.8"/><rect x="254.3" y="366.0" width="6.0" height="2.9" rx="0.8"/><rect x="248.5" y="370.0" width="2.8" height="2.9" rx="0.8"/><rect x="252.3" y="370.0" width="4.5" height="2.9" rx="0.8"/><rect x="257.8" y="370.0" width="4.0" height="2.9" rx="0.8"/><rect x="248.5" y="374.0" width="4.3" height="2.9" rx="0.8"/><rect x="253.8" y="374.0" width="4.5" height="2.9" rx="0.8"/><rect x="259.3" y="374.0" width="4.0" height="2.9" rx="0.8"/></g></svg>
<svg style="left:0;top:0" width="1" height="1"><g fill="#111"><rect x="248.5" y="382.0" width="3.3" height="2.9" rx="0.8"/><rect x="252.8" y="382.0" width="4.5" height="2.9" rx="0.8"/><rect x="248.5" y="386.0" width="4.8" height="2.9" rx="0.8"/><rect x="254.3" y="386.0" width="6.0" height="2.9" rx="0.8"/><rect x="248.5" y="390.0" width="2.8" height="2.9" rx="0.8"/><rect x="252.3" y="390.0" width="4.5" height="2.9" rx="0.8"/><rect x="257.8" y="390.0" width="4.0" height="2.9" rx="0.8"/><rect x="248.5" y="394.0" width="4.3" height="2.9" rx="0.8"/><rect x="253.8" y="394.0" width="4.5" height="2.9" rx="0.8"/><rect x="259.3" y="394.0" width="4.0" height="2.9" rx="0.8"/></g></svg>
<svg style="left:0;top:0" width="1" height="1"><g fill="#333">
<circle cx="256.3" cy="403.2" r="1.5"/></g><g fill="none" stroke="#333" stroke-linecap="round">
<path d="M254.5 406.2L252.5 410.5" stroke-width="2.6"/><path d="M252.6 410.5L250.8 416.6M253.6 410.8L255.2 416.6" stroke-width="1.3"/>
<path d="M254.8 406.5L256.6 409.8L259.8 413" stroke-width="1.1"/></g><g fill="#333"><path d="M257.3 417L260.8 412.6L264 417z"/></g></svg>
<svg style="left:0;top:0" width="1" height="1"><g fill="#111">
<path d="M601 362h5v6h4l-6.5 7l-6.5 -7h4z"/><path d="M601 381h5v6h4l-6.5 7l-6.5 -7h4z"/>
<path d="M1075 342h5v6h4l-6.5 7l-6.5 -7h4z"/></g><path d="M1076.3 344.7h2.5m-1.25 -1.25v2.5" stroke="#fff" stroke-width="1"/></svg>
<div class="a" style="left:34px;top:855px;width:720px;height:16.5px;background:#fff;border:1px solid #444;"></div>
<div class="t" style="left:36.5px;top:857.4px;font-size:11px;color:#222;">Paramètres</div>
<div class="t" style="left:37.0px;top:876.5px;font-size:11px;color:#222;">Épinette Rég &nbsp; 1" x &nbsp;3" x 12' Latte - &nbsp;- Latte</div>
<div class="a" style="left:375.5px;top:873px;width:2.2px;height:170px;background:#000;"></div>
<div class="a" style="left:40px;top:900.5px;width:287.5px;height:150px;border:1px solid #a8a8a8;"></div>
<div class="a" style="left:46px;top:896px;width:82px;height:10px;background:#fff;"></div>
<div class="t" style="left:48.5px;top:895.7px;font-size:11px;color:#333;">Liste des paramètres</div>
<div class="a" style="left:54px;top:911px;width:58.5px;height:20.5px;background:#222a35;"></div>
<div class="t" style="left:62.0px;top:916.7px;font-size:11px;color:#fff;">Systeme</div>
<div class="a" style="left:112.5px;top:909px;width:43.5px;height:22.5px;background:#1d2430;"></div>
<div class="t" style="left:121.0px;top:915.2px;font-size:11px;color:#fff;">Prive</div>
<div class="a" style="left:50px;top:931.3px;width:271px;height:1.6px;background:#222;"></div>
<div class="a" style="left:51px;top:933px;width:270.5px;height:32px;background:#fff;border:none;border-top:1px solid #cfcfcf;border-left:1px solid #aaa;"></div>
<svg style="left:0;top:0" width="1" height="1"><g fill="#10212e">
<path d="M66 942.5h3.5v6.5h6.5v3.5h-6.5v6.5h-3.5v-6.5h-6.5v-3.5h6.5z"/>
<path d="M90 943h20v2.5h-20z"/><path d="M96.5 941h7v2h-7z"/><path d="M91.5 946.5h17l-1 12.5h-15z"/>
<path d="M94.5 948.5v9m3.2 -9v9m3.2 -9v9m3.2 -9v9" stroke="#fff" stroke-width="1.2"/>
<path d="M125 943.5c0 -1.5 4.5 -2.5 10.5 -2.5s10.5 1 10.5 2.5l-7 8v7.5h-7v-7.5z"/><ellipse cx="135.5" cy="944" rx="8.5" ry="1.8" fill="#fff"/><path d="M133 947.5l5 4m0 -4l-5 4" stroke="#fff" stroke-width="1.2"/>
<rect x="159" y="949.5" width="15" height="2.5"/><rect x="166" y="946" width="12" height="2.5"/>
<path d="M192 943v15h16" fill="none" stroke="#10212e" stroke-width="1.3"/><path d="M195 950h1.5v6h-1.5zm3 -3h1.5v9h-1.5zm3 4h1.5v5h-1.5zm3 -5h1.5v10h-1.5z"/>
<rect x="227" y="942" width="10" height="4"/><rect x="222" y="946" width="20" height="9" rx="1.5"/><rect x="226" y="950" width="12" height="9"/><rect x="228" y="952" width="8" height="6" fill="#fff"/>
</g>
<g fill="none" stroke="#10212e" stroke-width="1.8"><path d="M256 949.5a7 7 0 0 1 13 -3"/><path d="M270 953a7 7 0 0 1 -13 3"/></g>
<g fill="#10212e"><path d="M271 941.5v6h-6z"/><path d="M255 960v-6h6z"/>
<path d="M302.5 941l4 4l-13.5 13.5l-6 2l2 -6z"/>
<path d="M338 963.5h21m-8 -9l9 9l-9 9" fill="none" stroke="#10212e" stroke-width="3.2"/>
<path d="M365 1003.5h-21m8 -9l-9 9l9 9" fill="none" stroke="#10212e" stroke-width="3.2"/>
</g>
<path d="M318 950a5 5 0 0 1 8 -3" fill="none" stroke="#555" stroke-width="1.2"/><text x="318" y="956" font-size="8" fill="#555" font-family="Liberation Sans">a</text>
</svg>
<div class="a" style="left:51px;top:969px;width:271px;height:75px;background:#fff;"></div>
<div class="a" style="left:51px;top:969px;width:254px;height:20px;background:#232b36;"></div>
<div class="a" style="left:70px;top:969px;width:1px;height:20px;background:#ddd;"></div>
<div class="a" style="left:171px;top:969px;width:1.2px;height:20px;background:#ddd;"></div>
<div class="a" style="left:221px;top:969px;width:1.2px;height:20px;background:#ddd;"></div>
<div class="a" style="left:71px;top:969px;width:100px;height:20px;overflow:hidden"><div class="t" style="left:-6px;top:4px;font-size:11.5px;font-weight:bold;color:#fff">faut</div></div>
<div class="a" style="left:172px;top:969px;width:49px;height:20px;overflow:hidden"><div class="t" style="left:-6px;top:4px;font-size:11.5px;font-weight:bold;color:#fff">in. / défaut</div></div>
<div class="t" style="left:250.0px;top:973.3px;font-size:11.5px;color:#fff;font-weight:bold;text-decoration:underline;">Favoris</div>
<div class="a" style="left:51px;top:989px;width:254px;height:19px;background:#dff3f2;"></div>
<div class="a" style="left:51px;top:989px;width:19px;height:60px;background:#efefef;border:1px solid #d4d4d4;"></div>
<div class="a" style="left:70px;top:1008px;width:235px;height:20px;background:#0a74d9;"></div>
<div class="a" style="left:171px;top:1008px;width:1.5px;height:20px;background:#fff;"></div>
<div class="a" style="left:221px;top:1008px;width:1.5px;height:20px;background:#fff;"></div>
<div class="a" style="left:171px;top:1028px;width:1px;height:15px;background:#e4e4e4;"></div>
<div class="a" style="left:221px;top:1028px;width:1px;height:15px;background:#e4e4e4;"></div>
<div class="a" style="left:51px;top:989px;width:19.5px;height:20px;background:#efefef;border:none;border-bottom:1px solid #8a8a8a;border-right:1px solid #8a8a8a;"></div>
<div class="a" style="left:51px;top:1008px;width:19.5px;height:20px;background:#efefef;border:none;border-bottom:1px solid #8a8a8a;border-right:1px solid #8a8a8a;"></div>
<div class="a" style="left:51px;top:1028px;width:19.5px;height:20px;background:#efefef;border:none;border-bottom:1px solid #8a8a8a;border-right:1px solid #8a8a8a;"></div>
<div class="a" style="left:51px;top:966px;width:270px;height:1px;background:#e6e6e6;"></div>
<div class="t" style="left:175.0px;top:1013.7px;font-size:11px;color:#fff;">%</div>
<div class="t" style="left:175.0px;top:1032.7px;font-size:11px;color:#222;">%</div>
<div class="a" style="left:305px;top:969px;width:17px;height:75px;background:#f0f0f0;border:none;border-left:1px solid #ddd;"></div>
<svg style="left:0;top:0" width="1" height="1"><path d="M310 978l3.5 -3l3.5 3" fill="none" stroke="#555" stroke-width="1.2"/></svg>
<div class="a" style="left:306.5px;top:986px;width:14px;height:17px;background:#cdcdcd;"></div>
<div class="a" style="left:265px;top:992px;width:13px;height:13px;background:#e8e8e8;border:1px solid #777;"></div>
<div class="a" style="left:267.5px;top:994.5px;width:8px;height:8px;background:linear-gradient(135deg,#56b7e6,#0f5f98);"></div>
<div class="a" style="left:265px;top:1011px;width:13px;height:13px;background:linear-gradient(#f4f4f4,#dcdcdc);border:1px solid #8d8d8d;"></div>
<svg style="left:0;top:0" width="1" height="1"><path d="M268.5 1017.5l2.5 4l4.5 -8" fill="none" stroke="#3a55a8" stroke-width="1.7"/></svg>
<div class="a" style="left:265px;top:1031px;width:13px;height:13px;background:linear-gradient(#f4f4f4,#dcdcdc);border:1px solid #8d8d8d;"></div>
<svg style="left:0;top:0" width="1" height="1"><path d="M268.5 1037.5l2.5 4l4.5 -8" fill="none" stroke="#3a55a8" stroke-width="1.7"/></svg>
<div class="a" style="left:40px;top:1010px;width:1px;height:40px;background:#cfcfcf;"></div>
<div class="a" style="left:388px;top:901px;width:347px;height:150px;border:1px solid #a8a8a8;"></div>
<div class="a" style="left:393px;top:896px;width:100px;height:10px;background:#fff;"></div>
<div class="t" style="left:395.0px;top:895.7px;font-size:11px;color:#333;">Paramètres de l'item</div>
<div class="a" style="left:398px;top:916px;width:340px;height:32.5px;background:#fff;border:none;border-top:1px solid #999;border-left:1px solid #999;"></div>
<svg style="left:0;top:0" width="1" height="1"><g fill="#10212e">
<path d="M417 924h4v7.5h8v4h-8v7.5h-4v-7.5h-8v-4h8z"/>
<path d="M445 925.5h20v2.5h-20z"/><path d="M451.5 923.5h7v2h-7z"/><path d="M446.5 929h17l-1 13.5h-15z"/>
<path d="M449.5 931v9.5m3.2 -9.5v9.5m3.2 -9.5v9.5m3.2 -9.5v9.5" stroke="#fff" stroke-width="1.2"/>
</g>
<g fill="none" stroke="#111" stroke-width="1.8">
<path d="M484 924h14"/><path d="M491 942v-15m-6 6l6 -6l6 6"/>
<path d="M523 942v-17m-6 6l6 -6l6 6"/>
<path d="M555 924v17m-6 -6l6 6l6 -6"/>
<path d="M587 924v15m-6 -6l6 6l6 -6"/><path d="M580 942h14"/>
</g>
<g fill="#10212e">
<path d="M613 925.5c0 -1.5 4.5 -2.5 10.5 -2.5s10.5 1 10.5 2.5l-7 8v8.5h-7v-8.5z"/><ellipse cx="623.5" cy="926" rx="8.5" ry="1.8" fill="#fff"/><path d="M621 929.5l5 4m0 -4l-5 4" stroke="#fff" stroke-width="1.2"/>
<rect x="645" y="932.5" width="15" height="2.5"/><rect x="652" y="929" width="12" height="2.5"/>
<path d="M680 925v16h16" fill="none" stroke="#10212e" stroke-width="1.3"/><path d="M683 933h1.5v6h-1.5zm3 -3h1.5v9h-1.5zm3 4h1.5v5h-1.5zm3 -5h1.5v10h-1.5z"/>
</g>
<text x="712" y="940" font-family="Liberation Serif" font-style="italic" font-size="17" fill="#666">fa</text><path d="M712 934h17" stroke="#666" stroke-width="1"/>
</svg>
<div class="a" style="left:398px;top:951.5px;width:340px;height:20px;background:#232b36;"></div>
<div class="a" style="left:417px;top:951.5px;width:1px;height:20px;background:#ddd;"></div>
<div class="a" style="left:536px;top:951.5px;width:1.2px;height:20px;background:#ddd;"></div>
<div class="t" style="left:417.0px;top:956.3px;width:119px;text-align:center;font-size:11.5px;color:#fff;font-weight:bold;">Code</div>
<div class="a" style="left:537px;top:951px;width:197px;height:20px;overflow:hidden"><div class="t" style="left:102px;top:4px;font-size:11.5px;font-weight:bold;color:#fff">Nom des param.</div></div>
<div class="a" style="left:398px;top:971.5px;width:340px;height:72px;background:#fff;"></div>
<div class="a" style="left:417px;top:972px;width:320px;height:20px;background:#dff3f2;"></div>
<div class="a" style="left:398px;top:971.5px;width:19.5px;height:75px;background:#efefef;border:1px solid #d4d4d4;"></div>
<div class="a" style="left:417px;top:992px;width:320px;height:2px;background:#000;"></div>
<div class="a" style="left:417px;top:1010px;width:320px;height:2px;background:#000;"></div>
<div class="a" style="left:417px;top:1029.5px;width:320px;height:1px;background:#e6e6e6;"></div>
<div class="a" style="left:536px;top:1012px;width:1px;height:20px;background:#e6e6e6;"></div>
<div class="t" style="left:421.0px;top:996.7px;font-size:11px;color:#222;">ET</div>
<div class="t" style="left:540.0px;top:996.7px;font-size:11px;color:#222;">Longueur Requis</div>
<div class="t" style="left:421.0px;top:1015.7px;font-size:11px;color:#222;">C</div>
<div class="t" style="left:540.0px;top:1015.7px;font-size:11px;color:#222;">Longueur par Morceaux</div>
<div class="a" style="left:1836px;top:950px;width:10px;height:87px;background:#ababab;"></div>
<div class="a" style="left:1242px;top:1033px;width:604px;height:4px;background:#ababab;"></div>
<div class="a" style="left:1836px;top:849px;width:10px;height:101px;background:#fff;"></div>
<div class="a" style="left:1836px;top:849px;width:10px;height:1px;background:#999;"></div>
<div class="a" style="left:1836px;top:855.5px;width:10px;height:1px;background:#888;"></div>
<div class="a" style="left:1836px;top:871px;width:10px;height:1px;background:#777;"></div>
<div class="a" style="left:1836px;top:900px;width:10px;height:1px;background:#888;"></div>
<div class="a" style="left:1836px;top:916px;width:10px;height:1px;background:#777;"></div>
<div class="a" style="left:1836px;top:949.5px;width:10px;height:1px;background:#ccc;"></div>
</div>
<div class="a" style="left:734px;top:376px;width:1102px;height:657px;background:#fff;border-top:1px solid #6a6a6a;border-left:1px solid #333;border-right:1px solid #6a6a6a;border-bottom:1px solid #8a8a8a;box-shadow:2px 2px 5px rgba(0,0,0,.3)"></div>
<div class="a" style="left:735px;top:377px;width:1100px;height:41.5px;background:#efefef;"></div>
<svg style="left:0;top:0" width="1" height="1"><rect x="737.5" y="389.5" width="15.5" height="15.5" fill="#1e2a36"/>
<g transform="translate(743,397.1) scale(0.2,0.21)"><path fill-rule="evenodd" fill="#f0c000" d="M-14.8 0L0 -14.8L14.8 0L0 14.8ZM-5.3 0L0 5.3L5.3 0L0 -5.3Z"/><path fill-rule="evenodd" fill="#f0c000" d="M5.800000000000001 0L20.6 -14.8L35.400000000000006 0L20.6 14.8ZM15.3 0L20.6 5.3L25.900000000000002 0L20.6 -5.3Z"/><path d="M-5.2 -10.5L0.4 -4.9M10 -5.2L15.7 0.5M4.8 -0.5L10.5 5.2" stroke="#1e2a36" stroke-width="2.5" fill="none"/></g>
<path d="M1710.5 398.5h16" stroke="#a8a8a8" stroke-width="1"/>
<rect x="1759.5" y="392.5" width="10.5" height="10.5" fill="none" stroke="#a8a8a8" stroke-width="1"/>
<path d="M1806 392l11.5 11.5m0 -11.5l-11.5 11.5" stroke="#8a8a8a" stroke-width="1.2"/>
</svg>
<div class="t" style="left:757.0px;top:391.0px;font-size:13.2px;color:#9a9a9a;">Gestion des équivalences</div>
<div class="t" style="left:745.5px;top:430.0px;font-size:11px;color:#444;">Code</div>
<div class="a" style="left:783px;top:428px;width:190.5px;height:17px;background:#fff;border:none;border-top:1px solid #a0a0a0;border-left:1px solid #a0a0a0;"></div>
<div class="t" style="left:787.0px;top:430.2px;font-size:11px;color:#222;">103799</div>
<div class="t" style="left:993.0px;top:430.0px;font-size:11px;color:#444;">Nom</div>
<div class="a" style="left:1031px;top:428px;width:527px;height:17px;background:#fff;border:none;border-top:1px solid #a0a0a0;border-left:1px solid #a0a0a0;"></div>
<div class="t" style="left:1035.0px;top:430.2px;font-size:11px;color:#222;">Épinette Rég &nbsp; 1" x &nbsp;3" x 12' Latte</div>
<div class="a" style="left:743.5px;top:486px;width:1083px;height:498px;background:#fff;border:1px solid #c8c8c8;border-right:1px solid #8c8c8c;border-bottom:1px solid #8c8c8c;"></div>
<div class="a" style="left:748px;top:464px;width:74px;height:22.5px;background:#f5f5f5;border:none;border-top:1px solid #d4d4d4;border-left:1px solid #d4d4d4;"></div>
<div class="t" style="left:756.0px;top:470.2px;font-size:11px;color:#555;">Équivalence</div>
<div class="a" style="left:821.5px;top:462px;width:130px;height:25px;background:#fff;border:none;border-top:1px solid #c8c8c8;border-left:1px solid #c8c8c8;border-right:2px solid #555;"></div>
<div class="t" style="left:832.0px;top:468.2px;font-size:11px;color:#333;">Options d'équivalence</div>
<div class="a" style="left:1144.5px;top:486.5px;width:3px;height:497px;background:#8eaad0;"></div>
<div class="a" style="left:753.5px;top:501.5px;width:382px;height:440px;border:1px solid #c6c6c6;"></div>
<div class="a" style="left:759px;top:496px;width:128px;height:10px;background:#fff;"></div>
<div class="t" style="left:763.0px;top:496.7px;font-size:11px;color:#333;">Liste d'items équivalents</div>
<div class="a" style="left:761.5px;top:511.5px;width:306px;height:33.5px;background:#fff;border:none;border-top:2px solid #777;border-left:2px solid #777;border-right:1px solid #e0e0e0;border-bottom:1px solid #e0e0e0;"></div>
<svg style="left:0;top:0" width="1" height="1"><g fill="#10212e" transform="translate(769,519.5)"><path d="M0 2.5c0 -1.5 4.5 -2.5 10 -2.5s10 1 10 2.5l-6.5 7.5v10h-7v-10z"/><ellipse cx="10" cy="3" rx="8" ry="1.8" fill="#fff"/><path d="M7.5 6.5l5 4m0 -4l-5 4" stroke="#fff" stroke-width="1.2"/><rect x="32" y="11" width="14" height="2.6"/><rect x="38.5" y="7.5" width="12" height="2.6"/><path d="M66 3v15h16" fill="none" stroke="#10212e" stroke-width="1.3"/><path d="M69 10h1.5v6h-1.5zm3 -3h1.5v9h-1.5zm3 4h1.5v5h-1.5zm3 -5h1.5v10h-1.5z"/><rect x="101" y="1" width="10" height="4"/><rect x="96" y="5" width="21" height="9" rx="1.5"/><rect x="100" y="9" width="13" height="10"/><rect x="102" y="11" width="9" height="7" fill="#fff"/></g></svg>
<div class="a" style="left:761.5px;top:547.5px;width:307px;height:388px;background:#fff;border:1px solid #888;"></div>
<div class="a" style="left:762.5px;top:548.5px;width:289px;height:20px;background:#232b36;"></div>
<div class="a" style="left:781.5px;top:548.5px;width:1px;height:20px;background:#ddd;"></div>
<div class="t" style="left:781.5px;top:552.8px;width:331px;text-align:center;font-size:11.5px;color:#fff;font-weight:bold;">Nom</div>
<div class="a" style="left:762.5px;top:568.5px;width:289px;height:19.5px;background:#dff3f2;"></div>
<div class="a" style="left:762.5px;top:568.5px;width:19px;height:350px;background:#efefef;"></div>
<div class="a" style="left:762.5px;top:588px;width:289px;height:329px;overflow:hidden">
<div class="a" style="left:0;top:-12px;width:19px;height:20px;border-bottom:1px solid #8a8a8a;border-right:1px solid #8a8a8a;background:#efefef"></div>
<div class="a" style="left:19px;top:7px;width:270px;height:1px;background:#ececec"></div>
<div class="t" style="left:23px;top:-7.8px;font-size:11.3px;color:#1a1a1a;white-space:pre">Épinette Traité Brun  2&quot; x   4&quot; x 10&#x27;</div>
<div class="a" style="left:0;top:8px;width:19px;height:20px;border-bottom:1px solid #8a8a8a;border-right:1px solid #8a8a8a;background:#efefef"></div>
<div class="a" style="left:19px;top:27px;width:270px;height:1px;background:#ececec"></div>
<div class="t" style="left:23px;top:12.2px;font-size:11.3px;color:#1a1a1a;white-space:pre">Épinette Traité Brun  2&quot; x   4&quot; x 12&#x27;</div>
<div class="a" style="left:0;top:28px;width:19px;height:20px;border-bottom:1px solid #8a8a8a;border-right:1px solid #8a8a8a;background:#efefef"></div>
<div class="a" style="left:19px;top:47px;width:270px;height:1px;background:#ececec"></div>
<div class="t" style="left:23px;top:32.2px;font-size:11.3px;color:#1a1a1a;white-space:pre">Épinette Traité Brun  2&quot; x   4&quot; x  8&#x27;</div>
<div class="a" style="left:0;top:48px;width:19px;height:20px;border-bottom:1px solid #8a8a8a;border-right:1px solid #8a8a8a;background:#efefef"></div>
<div class="a" style="left:19px;top:67px;width:270px;height:1px;background:#ececec"></div>
<div class="t" style="left:23px;top:52.2px;font-size:11.3px;color:#1a1a1a;white-space:pre">Épinette Traité Brun  2&quot; x   2&quot; x  8&#x27;</div>
<div class="a" style="left:0;top:68px;width:19px;height:20px;border-bottom:1px solid #8a8a8a;border-right:1px solid #8a8a8a;background:#efefef"></div>
<div class="a" style="left:19px;top:87px;width:270px;height:1px;background:#ececec"></div>
<div class="t" style="left:23px;top:72.2px;font-size:11.3px;color:#1a1a1a;white-space:pre">Épinette Traité Brun  2&quot; x   3&quot; x  8&#x27;</div>
<div class="a" style="left:0;top:88px;width:19px;height:20px;border-bottom:1px solid #8a8a8a;border-right:1px solid #8a8a8a;background:#efefef"></div>
<div class="a" style="left:19px;top:107px;width:270px;height:1px;background:#ececec"></div>
<div class="t" style="left:23px;top:92.2px;font-size:11.3px;color:#1a1a1a;white-space:pre">Épinette Traité Brun  6&quot; x   6&quot; x 12&#x27;</div>
<div class="a" style="left:0;top:108px;width:19px;height:20px;border-bottom:1px solid #8a8a8a;border-right:1px solid #8a8a8a;background:#efefef"></div>
<div class="a" style="left:19px;top:127px;width:270px;height:1px;background:#ececec"></div>
<div class="t" style="left:23px;top:112.2px;font-size:11.3px;color:#1a1a1a;white-space:pre">Épinette Traité Brun  4&quot; x   6&quot; x 10&#x27;</div>
<div class="a" style="left:0;top:128px;width:19px;height:20px;border-bottom:1px solid #8a8a8a;border-right:1px solid #8a8a8a;background:#efefef"></div>
<div class="a" style="left:19px;top:147px;width:270px;height:1px;background:#ececec"></div>
<div class="t" style="left:23px;top:132.2px;font-size:11.3px;color:#1a1a1a;white-space:pre">Épinette Traité Brun  4&quot; x   4&quot; x 12&#x27;</div>
<div class="a" style="left:0;top:148px;width:19px;height:20px;border-bottom:1px solid #8a8a8a;border-right:1px solid #8a8a8a;background:#efefef"></div>
<div class="a" style="left:19px;top:167px;width:270px;height:1px;background:#ececec"></div>
<div class="t" style="left:23px;top:152.2px;font-size:11.3px;color:#1a1a1a;white-space:pre">Colonne Carrée Traitée 3-1/4&quot; x 3-1/4&quot; x 104&quot;</div>
<div class="a" style="left:0;top:168px;width:19px;height:20px;border-bottom:1px solid #8a8a8a;border-right:1px solid #8a8a8a;background:#efefef"></div>
<div class="a" style="left:19px;top:187px;width:270px;height:1px;background:#ececec"></div>
<div class="t" style="left:23px;top:172.2px;font-size:11.3px;color:#1a1a1a;white-space:pre">Colonne Colonial Traitée 3-1/4&quot; x 3-1/4&quot; x 104&quot;</div>
<div class="a" style="left:0;top:188px;width:19px;height:20px;border-bottom:1px solid #8a8a8a;border-right:1px solid #8a8a8a;background:#efefef"></div>
<div class="a" style="left:19px;top:207px;width:270px;height:1px;background:#ececec"></div>
<div class="t" style="left:23px;top:192.2px;font-size:11.3px;color:#1a1a1a;white-space:pre">Colonne Colonial Traitée 6&quot; x 6&quot; x 10&#x27;</div>
<div class="a" style="left:0;top:208px;width:19px;height:20px;border-bottom:1px solid #8a8a8a;border-right:1px solid #8a8a8a;background:#efefef"></div>
<div class="a" style="left:19px;top:227px;width:270px;height:1px;background:#ececec"></div>
<div class="t" style="left:23px;top:212.2px;font-size:11.3px;color:#1a1a1a;white-space:pre">Épinette Rég   1&quot; x  3&quot; x 12&#x27; Latte</div>
<div class="a" style="left:19px;top:228px;width:270px;height:20px;background:#0a74d9"></div>
<div class="a" style="left:0;top:228px;width:19px;height:20px;border-bottom:1px solid #8a8a8a;border-right:1px solid #8a8a8a;background:#efefef"></div>
<div class="t" style="left:23px;top:232.2px;font-size:11.3px;color:#fff;white-space:pre">Épinette Rég   1&quot; x  6&quot; x 12&#x27; Latte</div>
<div class="a" style="left:0;top:248px;width:19px;height:20px;border-bottom:1px solid #8a8a8a;border-right:1px solid #8a8a8a;background:#efefef"></div>
<div class="a" style="left:19px;top:267px;width:270px;height:1px;background:#ececec"></div>
<div class="t" style="left:23px;top:252.2px;font-size:11.3px;color:#1a1a1a;white-space:pre">LVL  1-3/4&quot; x  9-1/2&quot; x 1&#x27;</div>
<div class="a" style="left:0;top:268px;width:19px;height:20px;border-bottom:1px solid #8a8a8a;border-right:1px solid #8a8a8a;background:#efefef"></div>
<div class="a" style="left:19px;top:287px;width:270px;height:1px;background:#ececec"></div>
<div class="t" style="left:23px;top:272.2px;font-size:11.3px;color:#1a1a1a;white-space:pre">Poutre 2.0E Parallam PSL 5-1/4&quot; x 11-7/8&quot; x 1&#x27;</div>
<div class="a" style="left:0;top:288px;width:19px;height:20px;border-bottom:1px solid #8a8a8a;border-right:1px solid #8a8a8a;background:#efefef"></div>
<div class="a" style="left:19px;top:307px;width:270px;height:1px;background:#ececec"></div>
<div class="t" style="left:23px;top:292.2px;font-size:11.3px;color:#1a1a1a;white-space:pre">Barre Résiliente Modèle #D1007 1 3/8&quot;x12&#x27; (latte insonorisante)</div>
<div class="a" style="left:0;top:308px;width:19px;height:20px;border-bottom:1px solid #8a8a8a;border-right:1px solid #8a8a8a;background:#efefef"></div>
<div class="a" style="left:19px;top:327px;width:270px;height:1px;background:#ececec"></div>
<div class="t" style="left:23px;top:312.2px;font-size:11.3px;color:#1a1a1a;white-space:pre">Épinette Sec  2&quot; x  6&quot; x   105x 1/4&quot;</div>
</div>
<div class="a" style="left:762.5px;top:568.5px;width:289px;height:19.5px;background:#dff3f2;"></div>
<div class="a" style="left:762.5px;top:568.5px;width:19px;height:19.5px;background:#efefef;border:none;border-right:1px solid #8a8a8a;border-bottom:1px solid #8a8a8a;"></div>
<div class="a" style="left:1051.5px;top:548.5px;width:16px;height:369px;background:#f0f0f0;"></div>
<div class="a" style="left:1052.5px;top:809px;width:14px;height:91px;background:#cdcdcd;"></div>
<div class="a" style="left:762.5px;top:917px;width:305px;height:17px;background:#f0f0f0;"></div>
<div class="a" style="left:845px;top:918.5px;width:155px;height:15px;background:#cdcdcd;"></div>
<svg style="left:0;top:0" width="1" height="1"><g fill="none" stroke="#555" stroke-width="1.2">
<path d="M1056 558.5l3.5 -3.5l3.5 3.5"/><path d="M1056 906.5l3.5 3.5l3.5 -3.5"/>
<path d="M772 922l-3 3.5l3 3.5"/><path d="M1041 922l3 3.5l-3 3.5"/></g></svg>
<div class="a" style="left:761px;top:951px;width:96px;height:23px;background:#fff;border:none;border-right:2px solid #111;border-bottom:2px solid #111;border-top:1px solid #f4f4f4;border-left:1px solid #f4f4f4;"></div>
<div class="t" style="left:761.0px;top:956.2px;width:96px;text-align:center;font-size:11px;color:#333;">Sélectionner</div>
<div class="a" style="left:1161px;top:951px;width:96px;height:23px;background:#fff;border:none;border-right:2px solid #111;border-bottom:2px solid #111;border-top:1px solid #f4f4f4;border-left:1px solid #f4f4f4;"></div>
<div class="t" style="left:1161.0px;top:956.2px;width:96px;text-align:center;font-size:11px;color:#333;">Sélectionner</div>
<div class="a" style="left:1077.5px;top:643px;width:46px;height:89px;background:#fff;border:1px solid #a8a8a8;"></div>
<div class="a" style="left:1077.5px;top:747px;width:46px;height:89px;background:#fff;border:1px solid #a8a8a8;"></div>
<svg style="left:0;top:0" width="1" height="1"><g fill="none" stroke="#10212e" stroke-width="1.8">
<path d="M1093 669h16m-6.5 -6.5l6.5 6.5l-6.5 6.5"/>
<path d="M1092.5 702v14" stroke-width="2.6"/><path d="M1096 709h14m-6.5 -6.5l6.5 6.5l-6.5 6.5" stroke-width="2.4"/>
<path d="M1109 773h-16m6.5 -6.5l-6.5 6.5l6.5 6.5"/>
<path d="M1109.5 806v14" stroke-width="2.6"/><path d="M1106 813h-14m6.5 -6.5l-6.5 6.5l6.5 6.5" stroke-width="2.4"/>
</g></svg>
<div class="a" style="left:1153.5px;top:501.5px;width:652.5px;height:439.5px;border:1px solid #c6c6c6;"></div>
<div class="a" style="left:1158px;top:496px;width:86px;height:10px;background:#fff;"></div>
<div class="t" style="left:1161.0px;top:496.7px;font-size:11px;color:#333;">Groupe d'options</div>
<div class="t" style="left:1163.0px;top:520.7px;font-size:11px;color:#1a0dff;text-decoration:underline;">Nom du groupe</div>
<div class="t" style="left:1163.0px;top:544.3px;font-size:11px;color:#444;">Nompersonnalisé</div>
<div class="a" style="left:1289px;top:511.5px;width:200px;height:18px;background:#e6e6e6;border:1px solid #c8c8c8;"></div>
<div class="t" style="left:1292.0px;top:515.2px;font-size:11px;color:#111;">Lattes murales</div>
<svg style="left:0;top:0" width="1" height="1"><path d="M1478 518.5h6l-3 3z" fill="#aaa"/></svg>
<div class="a" style="left:1289px;top:535px;width:200px;height:19px;background:#fff;border:1px solid #c8c8c8;"></div>
<div class="t" style="left:1291.0px;top:538.2px;font-size:11px;color:#111;">Lattes murales</div>
<div class="a" style="left:1289.5px;top:560.5px;width:11.5px;height:11.5px;background:#fff;border:1px solid #bbb;"></div>
<svg style="left:0;top:0" width="1" height="1"><path d="M1292 566l2.5 3l4.5 -6" fill="none" stroke="#111" stroke-width="1.5"/></svg>
<div class="t" style="left:1307.0px;top:560.7px;font-size:11px;color:#333;">Groupe d'options sélectionné</div>
<div class="a" style="left:1162px;top:583px;width:636px;height:35px;background:#fff;border:none;border-top:2px solid #777;border-left:1px solid #ccc;border-right:1px solid #e4e4e4;border-bottom:1px solid #e4e4e4;"></div>
<svg style="left:0;top:0" width="1" height="1"><path fill="#10212e" d="M1180.5 591.5h4v7.5h8v4h-8v7.5h-4v-7.5h-8v-4h8z"/></svg>
<svg style="left:0;top:0" width="1" height="1"><g fill="#10212e" transform="translate(1213,591)"><path d="M0 2.5c0 -1.5 4.5 -2.5 10 -2.5s10 1 10 2.5l-6.5 7.5v10h-7v-10z"/><ellipse cx="10" cy="3" rx="8" ry="1.8" fill="#fff"/><path d="M7.5 6.5l5 4m0 -4l-5 4" stroke="#fff" stroke-width="1.2"/><rect x="32" y="11" width="14" height="2.6"/><rect x="38.5" y="7.5" width="12" height="2.6"/><path d="M66 3v15h16" fill="none" stroke="#10212e" stroke-width="1.3"/><path d="M69 10h1.5v6h-1.5zm3 -3h1.5v9h-1.5zm3 4h1.5v5h-1.5zm3 -5h1.5v10h-1.5z"/><rect x="101" y="1" width="10" height="4"/><rect x="96" y="5" width="21" height="9" rx="1.5"/><rect x="100" y="9" width="13" height="10"/><rect x="102" y="11" width="9" height="7" fill="#fff"/></g></svg>
<div class="a" style="left:1162px;top:619px;width:636.5px;height:315.5px;background:#ababab;border:1px solid #8a8a8a;"></div>
<div class="a" style="left:1162px;top:619px;width:417px;height:121px;background:#fff;border:1px solid #8a8a8a;"></div>
<div class="a" style="left:1163px;top:620px;width:416px;height:20px;background:#232b36;"></div>
<div class="a" style="left:1181.5px;top:620px;width:1.2px;height:20px;background:#ddd;"></div>
<div class="a" style="left:1229px;top:620px;width:1.2px;height:20px;background:#ddd;"></div>
<div class="a" style="left:1305.5px;top:620px;width:1.2px;height:20px;background:#ddd;"></div>
<div class="a" style="left:1516px;top:620px;width:1.2px;height:20px;background:#ddd;"></div>
<div class="t" style="left:1181.5px;top:624.8px;width:47.5px;text-align:center;font-size:11.5px;color:#fff;font-weight:bold;">Code</div>
<div class="t" style="left:1229.0px;top:624.8px;width:76.5px;text-align:center;font-size:11.5px;color:#fff;font-weight:bold;">Code Class.</div>
<div class="t" style="left:1305.5px;top:624.8px;width:210.5px;text-align:center;font-size:11.5px;color:#fff;font-weight:bold;">Nom</div>
<div class="t" style="left:1516.0px;top:624.8px;width:63px;text-align:center;font-size:11.5px;color:#fff;font-weight:bold;">Standard</div>
<div class="a" style="left:1163px;top:640px;width:416px;height:20px;background:#dff3f2;"></div>
<div class="a" style="left:1163px;top:640px;width:18.5px;height:100px;background:#efefef;border:none;border-right:1px solid #888;"></div>
<div class="a" style="left:1163px;top:659px;width:18.5px;height:1px;background:#888;"></div>
<div class="a" style="left:1181.5px;top:660px;width:397.5px;height:19.5px;background:#0a74d9;"></div>
<div class="a" style="left:1163px;top:679.5px;width:416px;height:1px;background:#e6e6e6;"></div>
<div class="a" style="left:1163px;top:660px;width:18.5px;height:20px;border:none;border-bottom:1px solid #888;border-right:1px solid #888;"></div>
<div class="t" style="left:1185.5px;top:663.5px;font-size:11px;color:#fff;">102191</div>
<div class="t" style="left:1233.0px;top:663.5px;font-size:11px;color:#fff;">06M</div>
<div class="t" style="left:1309px;top:663.5px;font-size:11px;color:#fff;white-space:pre">Épinette Rég   1&quot; x  4&quot; x 12&#x27; Latte</div>
<div class="a" style="left:1540px;top:663.5px;width:13px;height:13px;background:linear-gradient(#f4f4f4,#dcdcdc);border:1px solid #8d8d8d;"></div>
<svg style="left:0;top:0" width="1" height="1"><path d="M1543.5 670.0l2.5 4l4.5 -8" fill="none" stroke="#3a55a8" stroke-width="1.7"/></svg>
<div class="a" style="left:1163px;top:699.5px;width:416px;height:1px;background:#e6e6e6;"></div>
<div class="a" style="left:1163px;top:680px;width:18.5px;height:20px;border:none;border-bottom:1px solid #888;border-right:1px solid #888;"></div>
<div class="t" style="left:1185.5px;top:683.5px;font-size:11px;color:#1a1a1a;">102193</div>
<div class="t" style="left:1233.0px;top:683.5px;font-size:11px;color:#1a1a1a;">06M</div>
<div class="t" style="left:1309px;top:683.5px;font-size:11px;color:#1a1a1a;white-space:pre">Épinette Rég   1&quot; x  3&quot; x 12&#x27; Latte Brute</div>
<div class="a" style="left:1540px;top:683.5px;width:13px;height:13px;background:linear-gradient(#f4f4f4,#dcdcdc);border:1px solid #8d8d8d;"></div>
<svg style="left:0;top:0" width="1" height="1"><path d="M1543.5 690.0l2.5 4l4.5 -8" fill="none" stroke="#3a55a8" stroke-width="1.7"/></svg>
<div class="a" style="left:1163px;top:719.5px;width:416px;height:1px;background:#e6e6e6;"></div>
<div class="a" style="left:1163px;top:700px;width:18.5px;height:20px;border:none;border-bottom:1px solid #888;border-right:1px solid #888;"></div>
<div class="t" style="left:1185.5px;top:703.5px;font-size:11px;color:#1a1a1a;">103799</div>
<div class="t" style="left:1233.0px;top:703.5px;font-size:11px;color:#1a1a1a;">06M</div>
<div class="t" style="left:1309px;top:703.5px;font-size:11px;color:#1a1a1a;white-space:pre">Épinette Rég   1&quot; x  3&quot; x 12&#x27; Latte</div>
<div class="a" style="left:1540px;top:703.5px;width:13px;height:13px;background:linear-gradient(#f4f4f4,#dcdcdc);border:1px solid #8d8d8d;"></div>
<svg style="left:0;top:0" width="1" height="1"><path d="M1543.5 710.0l2.5 4l4.5 -8" fill="none" stroke="#3a55a8" stroke-width="1.7"/></svg>
<div class="a" style="left:1163px;top:739.5px;width:416px;height:1px;background:#e6e6e6;"></div>
<div class="a" style="left:1163px;top:720px;width:18.5px;height:20px;border:none;border-bottom:1px solid #888;border-right:1px solid #888;"></div>
<div class="t" style="left:1185.5px;top:723.5px;font-size:11px;color:#1a1a1a;">103850</div>
<div class="t" style="left:1233.0px;top:723.5px;font-size:11px;color:#1a1a1a;">06M</div>
<div class="t" style="left:1309px;top:723.5px;font-size:11px;color:#1a1a1a;white-space:pre">Épinette Rég   1&quot; x  6&quot; x 12&#x27; Latte</div>
<div class="a" style="left:1540px;top:723.5px;width:13px;height:13px;background:linear-gradient(#f4f4f4,#dcdcdc);border:1px solid #8d8d8d;"></div>
<svg style="left:0;top:0" width="1" height="1"><path d="M1543.5 730.0l2.5 4l4.5 -8" fill="none" stroke="#3a55a8" stroke-width="1.7"/></svg>
<div class="a" style="left:1229px;top:660px;width:1px;height:80px;background:rgba(200,200,200,.5);"></div>
<div class="a" style="left:1305.5px;top:660px;width:1px;height:80px;background:rgba(200,200,200,.5);"></div>
<div class="a" style="left:1516px;top:660px;width:1px;height:80px;background:rgba(200,200,200,.5);"></div>
<div class="a" style="left:1540px;top:643.5px;width:13px;height:13px;background:#e8e8e8;border:1px solid #777;"></div>
<div class="a" style="left:1542.5px;top:646px;width:8px;height:8px;background:linear-gradient(135deg,#56b7e6,#0f5f98);"></div>
<div class="a" style="left:1739.5px;top:1002px;width:74px;height:23.5px;background:#fff;border:none;border-right:2px solid #111;border-bottom:2px solid #111;border-top:1px solid #f4f4f4;border-left:1px solid #f4f4f4;"></div>
<div class="t" style="left:1739.5px;top:1007.2px;width:74px;text-align:center;font-size:11px;color:#333;">Terminer</div>
<svg style="left:0;top:0" width="1" height="1"><g fill="#555"><rect x="1831" y="1024" width="2" height="2"/><rect x="1828" y="1027" width="2" height="2"/><rect x="1831" y="1027" width="2" height="2"/><rect x="1825" y="1030" width="2" height="2"/><rect x="1828" y="1030" width="2" height="2"/><rect x="1831" y="1030" width="2" height="2"/></g></svg>
<svg style="left:0;top:0" width="1855" height="1046"><defs><filter id="sh" x="-20%" y="-30%" width="140%" height="160%"><feGaussianBlur in="SourceAlpha" stdDeviation="1.6"/><feOffset dx="2" dy="2.5"/><feComponentTransfer><feFuncA type="linear" slope="0.45"/></feComponentTransfer><feMerge><feMergeNode/><feMergeNode in="SourceGraphic"/></feMerge></filter></defs><ellipse cx="828.5" cy="397.7" rx="103.5" ry="20.5" fill="none" stroke="#9a0b0b" stroke-width="2.9" filter="url(#sh)"/><ellipse cx="1396.4" cy="519.2" rx="122.4" ry="23.5" fill="none" stroke="#9a0b0b" stroke-width="2.9" filter="url(#sh)"/><ellipse cx="1370" cy="567.4" rx="99.3" ry="15.6" fill="none" stroke="#9a0b0b" stroke-width="2.9" filter="url(#sh)"/><ellipse cx="1182.9" cy="600.9" rx="20.8" ry="19.7" fill="none" stroke="#9a0b0b" stroke-width="2.9" filter="url(#sh)"/><ellipse cx="1103" cy="667" rx="22.3" ry="19.7" fill="none" stroke="#9a0b0b" stroke-width="2.9" filter="url(#sh)"/><ellipse cx="1774.7" cy="1013.2" rx="55.3" ry="20.6" fill="none" stroke="#9a0b0b" stroke-width="2.9" filter="url(#sh)"/><circle cx="1258.2" cy="516.8" r="14.4" fill="#850404"/><text x="1258.2" y="522.8" font-family="Liberation Sans" font-size="17" fill="#fff" text-anchor="middle">1</text><circle cx="1248.5" cy="564.5" r="14.4" fill="#850404"/><text x="1248.5" y="570.5" font-family="Liberation Sans" font-size="17" fill="#fff" text-anchor="middle">4</text><circle cx="1151" cy="584.8" r="14.4" fill="#850404"/><text x="1151" y="590.8" font-family="Liberation Sans" font-size="17" fill="#fff" text-anchor="middle">2</text><circle cx="1085.3" cy="631.4" r="14.4" fill="#850404"/><text x="1085.3" y="637.4" font-family="Liberation Sans" font-size="17" fill="#fff" text-anchor="middle">3</text><circle cx="1694.5" cy="1007" r="14.4" fill="#850404"/><text x="1694.5" y="1013" font-family="Liberation Sans" font-size="17" fill="#fff" text-anchor="middle">5</text></svg>
</body></html>
